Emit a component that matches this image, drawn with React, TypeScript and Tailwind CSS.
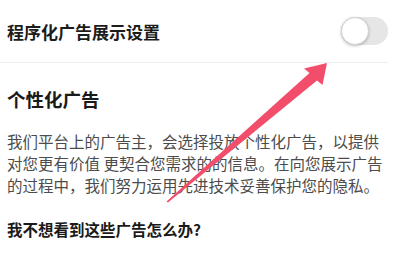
import React from "react";

export default function App() {
  return (
    <div
      className="relative w-[400px] h-[256px] overflow-hidden bg-white"
      style={{ fontFamily: '"Noto Sans CJK SC", "Noto Sans", sans-serif' }}
    >
      <div className="flex items-center justify-between h-[63px] mr-[12px] pl-[7px] border-b border-[#eeeeee]">
        <div className="text-[17px] font-bold text-[#1c1c1c] leading-[24px] pt-[2px]">程序化广告展示设置</div>
        <div className="relative w-[47px] h-[28px] rounded-full bg-[#e6e6e6]">
          <div className="absolute left-0 top-0 w-[28px] h-[28px] rounded-full bg-white border border-[#d4d4d4] shadow-[0_1px_3px_rgba(0,0,0,0.25)]" />
        </div>
      </div>
      <div className="pl-[7px] pr-[10px]">
        <div className="mt-[23px] text-[18.5px] font-bold text-[#1a1a1a] leading-[26px]">个性化广告</div>
        <div className="mt-[18px] text-[15.5px] text-[#4c4c4c] leading-[22px]">
          <div className="whitespace-nowrap">我们平台上的广告主，会选择投放个性化广告，以提供</div>
          <div className="whitespace-nowrap">对您更有价值 更契合您需求的的信息。在向您展示广告</div>
          <div className="whitespace-nowrap">的过程中，我们努力运用先进技术妥善保护您的隐私。</div>
        </div>
        <div className="mt-[22px] text-[15.5px] font-bold text-[#1a1a1a] leading-[22px]">我不想看到这些广告怎么办?</div>
      </div>
      <svg className="absolute left-0 top-0 pointer-events-none" width="400" height="256" viewBox="0 0 400 256">
        <polygon
          points="327,63 322.5,85 317,80.5 168,202.5 166.5,201.5 309.5,73 304,68.5"
          fill="#f24e6c"
        />
      </svg>
    </div>
  );
}
